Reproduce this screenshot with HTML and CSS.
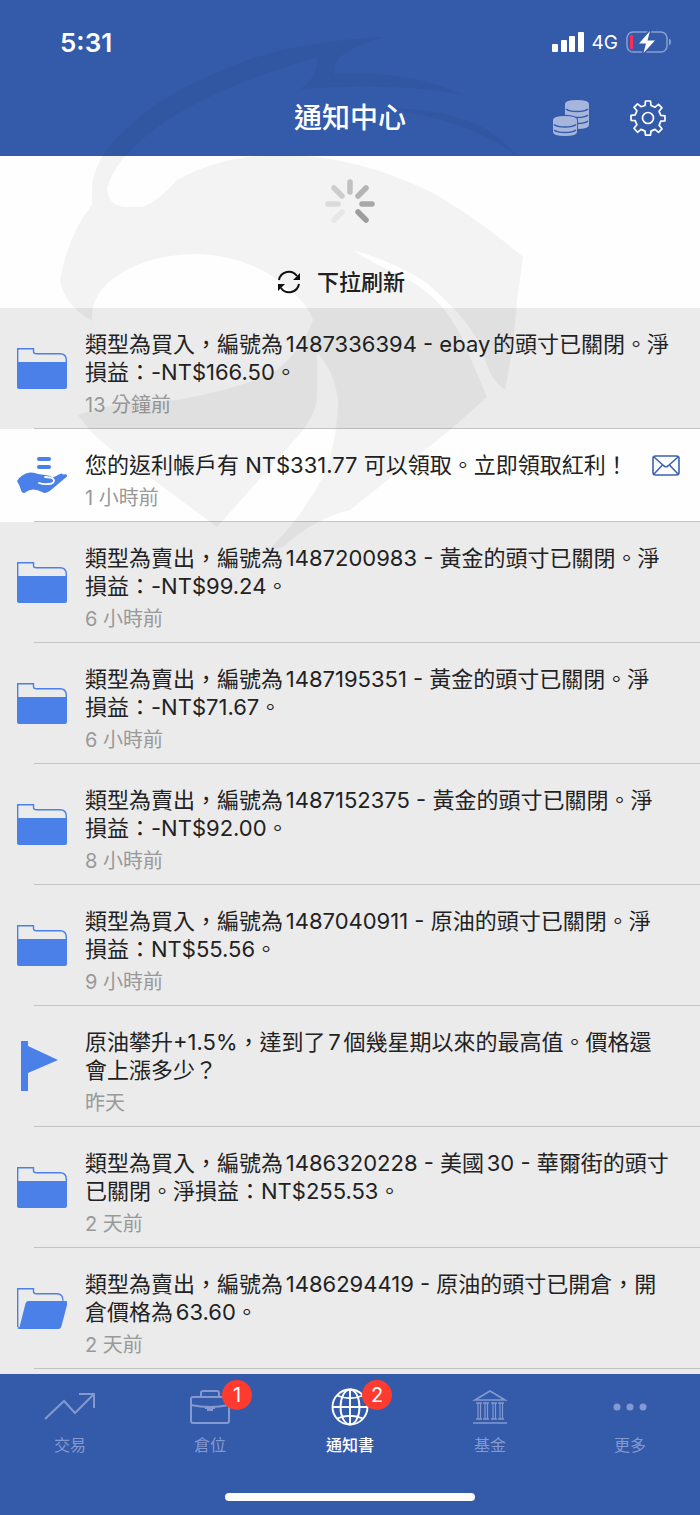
FILE: index.html
```html
<!DOCTYPE html>
<html lang="zh-Hant">

<head>
    <meta charset="UTF-8">
    <meta name="viewport" content="width=device-width, initial-scale=1.0">
    <title>通知中心</title>
    <link rel="stylesheet" href="styles.css">
</head>

<body>
    <!-- shared icons -->
    <svg class="defs" width="0" height="0">
        <symbol id="folder" viewBox="0 0 50 50">
            <path d="M.7 44V5.700h15.800v3q0 2 3 2H43q6.300 0 6.300 6.300V44" fill="none" stroke="#4a80e8" stroke-width="1.400" />
            <path d="M0 19h50v25q0 2-2 2H2q-2 0-2-2z" fill="#4a80e8" />
        </symbol>
        <symbol id="folder-open" viewBox="0 0 50 50">
            <path d="M.7 44V5.700h15.800v3q0 2 3 2H40q6 0 6 7M.7 45H4" fill="none" stroke="#4a80e8" stroke-width="1.400" />
            <path d="M11 18h38q2 0 1.500 2l-6 23q-.7 3-3 3H2L8.500 20.500q.6-2.500 2.500-2.500z" fill="#4a80e8" />
        </symbol>
        <symbol id="flag" viewBox="0 0 50 50">
            <path d="M4 0h7v5l30 14-30 13v18H4z" fill="#4a80e8" />
        </symbol>
        <symbol id="hand" viewBox="0 0 50 50">
            <g fill="#4a80e8">
                <rect x="20" y="7" width="14" height="4" rx="2" />
                <rect x="20" y="15" width="14" height="4" rx="2" />
                <path d="M0 31q4-7 13-8.500 4-.5 8 1.500l10 1.500q4 .5 4 2.500l8-4q2-1 3 .5 4-1 4.500 1.500L34 40q-5 4.500-9 2-4-2.500-9-2.500-4 0-7 2.500-3 2-4.500-.5Q3 36 0 31z" />
            </g>
            <path d="M22 33q4 1.500 10 1 5-.5 5-3.500 0-2-4-3l-5-.5" fill="none" stroke="#fefefe" stroke-width="1.800" stroke-linecap="round" />
        </symbol>
    </svg>

    <div id="app">
        <header>
            <div class="status">
                <span class="clock">5:31</span>
                <div class="signal">
                    <svg width="32" height="20" viewBox="0 0 32 20" fill="#fff">
                        <rect y="12" width="6" height="8" rx="1" />
                        <rect x="9" y="8" width="6" height="12" rx="1" />
                        <rect x="17" y="4" width="6" height="16" rx="1" />
                        <rect x="26" width="6" height="20" rx="1" />
                    </svg>
                    <span>4G</span>
                    <svg width="46" height="22" viewBox="0 0 46 22">
                        <rect x="1" y="1" width="40" height="20" rx="6" fill="none" stroke="#8a9fd0" stroke-width="1.500" />
                        <path d="M43.500 8q2.500 3 0 6z" fill="#8a9fd0" stroke="#8a9fd0" />
                        <rect x="4" y="4" width="3" height="14" rx="1" fill="#ff2d55" />
                        <path d="M24 0L13 12.500h7L17.500 22 29 9.500h-7.500z" fill="#fff" stroke="#345aaa" stroke-width="3" paint-order="stroke" />
                    </svg>
                </div>
            </div>
            <div class="titlebar">
                <h1>通知中心</h1>
                <button type="button" aria-label="返利">
                    <svg width="38" height="38" viewBox="0 0 38 38">
                        <path d="M13 5q0-4 12-4t12 4v21q0 4-12 4t-12-4z" fill="#a5b5dc" />
                        <path d="M14 10q3 2.500 11 2.500T36 10M14 16q3 2.500 11 2.500T36 16M14 22q3 2.500 11 2.500T36 22" fill="none" stroke="#345aaa" stroke-width="1.600" />
                        <path d="M1 21q0-4 12-4t12 4v12q0 4-12 4T1 33z" fill="#a5b5dc" stroke="#345aaa" stroke-width="2" paint-order="stroke" />
                        <path d="M2 25.500q3 2.500 11 2.500t11-2.500M2 31q3 2.500 11 2.500T24 31" fill="none" stroke="#345aaa" stroke-width="1.600" />
                    </svg>
                </button>
                <button type="button" aria-label="設定">
                    <svg width="36" height="36" viewBox="0 0 36 36" fill="none" stroke="#fff" stroke-width="1.700" stroke-linejoin="round">
                        <path d="M15 5.500L15.500 1h5l.5 4.500 4 1.700 3.500-2.900 3.500 3.500-2.900 3.500 1.700 4 4.200.5v5l-4.200.4-1.700 4.100 2.900 3.500-3.500 3.500-3.500-2.900-4 1.700-.5 4h-5l-.5-4-4-1.700-3.500 2.900L4 28.300l2.900-3.500-1.700-4.100-4.200-.4v-5l4.200-.5 1.700-4L4 7.300l3.500-3.500L11 6.700z" />
                        <circle cx="18" cy="18" r="5.500" />
                    </svg>
                </button>
            </div>
        </header>

        <section class="refresh">
            <svg class="spinner" width="52" height="52" viewBox="0 0 52 52" fill="none" stroke-width="5.500" stroke-linecap="round">
                <path d="M26 4v10" stroke="#cacaca" />
                <path d="M42 10l-8 8" stroke="#bdbdbd" />
                <path d="M48 26H38" stroke="#b0b0b0" />
                <path d="M42 42l-8-8" stroke="#a5a5a5" />
                <path d="M10 42l8-8" stroke="#f2f2f2" />
                <path d="M4 26h10" stroke="#e5e5e5" />
                <path d="M10 10l8 8" stroke="#d7d7d7" />
            </svg>
            <div class="pull">
                <svg width="24" height="24" viewBox="0 0 24 24">
                    <path d="M2 10A10 10 0 0 1 20 6M22 14A10 10 0 0 1 4 18" fill="none" stroke="#111" stroke-width="2" />
                    <path d="M23 3v7h-7zM1 21v-7h7z" fill="#111" />
                </svg>
                <span>下拉刷新</span>
            </div>
        </section>

        <ul class="list">
            <li>
                <svg class="icon"><use href="#folder" /></svg>
                <div class="text">
                    <p>類型為買入，編號為1487336394 - ebay的頭寸已關閉。淨損益：-NT$166.50。</p>
                    <time>13 分鐘前</time>
                </div>
            </li>
            <li class="unread">
                <svg class="icon"><use href="#hand" /></svg>
                <div class="text">
                    <p>您的返利帳戶有 NT$331.77 可以領取。立即領取紅利！</p>
                    <time>1 小時前</time>
                </div>
                <svg class="mail" width="28" height="21" viewBox="0 0 28 21" fill="none" stroke="#3d62ae" stroke-width="1.600">
                    <rect x="1" y="1" width="26" height="19" rx="2.500" />
                    <path d="M2 2l10 9q2 1.500 4 0l10-9M2 19l8.500-9M26 19l-8.500-9" />
                </svg>
            </li>
            <li>
                <svg class="icon"><use href="#folder" /></svg>
                <div class="text">
                    <p>類型為賣出，編號為1487200983 - 黃金的頭寸已關閉。淨損益：-NT$99.24。</p>
                    <time>6 小時前</time>
                </div>
            </li>
            <li>
                <svg class="icon"><use href="#folder" /></svg>
                <div class="text">
                    <p>類型為賣出，編號為1487195351 - 黃金的頭寸已關閉。淨損益：-NT$71.67。</p>
                    <time>6 小時前</time>
                </div>
            </li>
            <li>
                <svg class="icon"><use href="#folder" /></svg>
                <div class="text">
                    <p>類型為賣出，編號為1487152375 - 黃金的頭寸已關閉。淨損益：-NT$92.00。</p>
                    <time>8 小時前</time>
                </div>
            </li>
            <li>
                <svg class="icon"><use href="#folder" /></svg>
                <div class="text">
                    <p>類型為買入，編號為1487040911 - 原油的頭寸已關閉。淨損益：NT$55.56。</p>
                    <time>9 小時前</time>
                </div>
            </li>
            <li>
                <svg class="icon"><use href="#flag" /></svg>
                <div class="text">
                    <p>原油攀升+1.5%，達到了7個幾星期以來的最高值。價格還會上漲多少？</p>
                    <time>昨天</time>
                </div>
            </li>
            <li>
                <svg class="icon"><use href="#folder" /></svg>
                <div class="text">
                    <p>類型為買入，編號為1486320228 - 美國30 - 華爾街的頭寸已關閉。淨損益：NT$255.53。</p>
                    <time>2 天前</time>
                </div>
            </li>
            <li>
                <svg class="icon"><use href="#folder-open" /></svg>
                <div class="text">
                    <p>類型為賣出，編號為1486294419 - 原油的頭寸已開倉，開倉價格為63.60。</p>
                    <time>2 天前</time>
                </div>
            </li>
        </ul>

        <footer>
            <nav>
                <a href="#trade">
                    <svg width="52" height="38" viewBox="0 0 52 38" fill="none" stroke="currentColor" stroke-width="2">
                        <path d="M1 31l19-18 11 12L50 6M35 6h15v14" />
                    </svg>
                    交易
                </a>
                <a href="#positions">
                    <svg width="42" height="38" viewBox="0 0 42 38" fill="none" stroke="currentColor" stroke-width="2">
                        <rect x="2" y="9" width="38" height="26" rx="2" />
                        <path d="M12 9V5q0-2 2-2h14q2 0 2 2v4M2 17q19 4 38 0" />
                        <path d="M16 19h10v2h-2v2h-6v-2h-2z" fill="currentColor" stroke="none" />
                    </svg>
                    倉位
                    <span class="badge">1</span>
                </a>
                <a href="#notifications" class="active">
                    <svg width="38" height="38" viewBox="0 0 38 38" fill="none" stroke="currentColor" stroke-width="1.900">
                        <circle cx="19" cy="19" r="17.500" />
                        <ellipse cx="19" cy="19" rx="9.500" ry="17.500" />
                        <path d="M19 1v36M1 19h36M6 7.500q13 5.500 26 0M6 30.500q13-5.500 26 0" />
                    </svg>
                    通知書
                    <span class="badge">2</span>
                </a>
                <a href="#funds">
                    <svg width="36" height="38" viewBox="0 0 36 38" fill="none" stroke="currentColor" stroke-width="1.600">
                        <path d="M3 12L18 3l15 9zM4 15h6M11 15h6M19 15h6M26 15h6M4 31h6M11 31h6M19 31h6M26 31h6M1 35h34" />
                        <path d="M6 15v16M8.500 15v16M13 15v16M15.500 15v16M21 15v16M23.500 15v16M28 15v16M30.500 15v16" stroke-width="1.200" />
                    </svg>
                    基金
                </a>
                <a href="#more">
                    <svg width="36" height="38" viewBox="0 0 36 38" fill="currentColor">
                        <circle cx="5" cy="19" r="3.500" />
                        <circle cx="18" cy="19" r="3.500" />
                        <circle cx="31" cy="19" r="3.500" />
                    </svg>
                    更多
                </a>
            </nav>
            <div class="home"></div>
        </footer>

        <!-- eagle watermark over the page -->
        <svg class="watermark" width="540" height="560" viewBox="0 0 540 560">
            <path d="M383 37Q290 42 232 66Q160 95 130 126Q92 158 92 190V205Q68 235 60 280Q64 305 92 321Q90 292 120 274Q150 254 200 254Q255 257 290 290Q308 305 313 320Q302 350 277 370Q250 386 177 400Q110 402 78 415Q95 440 120 455L217 527L297 437Q317 415 317 395V353Q334 370 338 400Q338 440 323 477Q300 520 268 550L283 547Q315 518 350 510L450 430L487 397L470 357Q450 300 403 277Q370 262 353 250Q395 262 427 283Q475 325 483 353Q490 380 505 390Q514 345 517 300L523 257Q480 220 433 193Q355 155 283 155Q225 154 177 180Q160 200 143 207H127Q108 207 107 188Q115 160 150 133Q200 92 317 57Q318 78 300 89Q400 82 463 95Q410 70 335 74Q325 55 383 37z" />
            <path d="M383 108Q480 108 517 156Q470 120 383 108z" />
        </svg>
    </div>
</body>

</html>
```
FILE: styles.css
```css
body {
    margin: 0;
    font-family: Inter, "Noto Sans CJK TC", sans-serif;
    background-color: #fefefe;
    color: #222;
}

.defs {
    display: block;
}

#app {
    position: relative;
    display: flex;
    flex-direction: column;
    min-height: 100vh;
}

header {
    background-color: #345aaa;
    color: #fff;
}

.status {
    display: flex;
    justify-content: space-between;
    align-items: center;
    height: 84px;
    padding: 0 28px 0 60px;
}

.clock {
    font-size: 26px;
    font-weight: 600;
}

.signal {
    display: flex;
    align-items: center;
    gap: 8px;
    font-size: 19px;
}

.titlebar {
    display: grid;
    grid-template-columns: 1fr 56px 76px;
    align-items: center;
    height: 68px;
    padding: 0 34px 4px;
}

h1 {
    grid-column: 1 / -1;
    grid-row: 1;
    margin: 0;
    text-align: center;
    font-size: 28px;
    font-weight: 500;
    line-height: 40px;
}

.titlebar button {
    grid-row: 1;
    display: flex;
    justify-content: flex-end;
    padding: 0;
    border: none;
    background: none;
    cursor: pointer;
}

.titlebar button:nth-of-type(1) {
    grid-column: 2;
}

.titlebar button:nth-of-type(2) {
    grid-column: 3;
}

.refresh {
    display: flex;
    flex-direction: column;
    align-items: center;
    gap: 36px;
    height: 130px;
    padding-top: 22px;
}

.pull {
    display: flex;
    align-items: center;
    gap: 16px;
    padding-right: 18px;
    font-size: 22px;
    font-weight: 500;
    line-height: 32px;
}

.list {
    flex: 1;
    margin: 0;
    padding: 0 0 5px;
    list-style: none;
    background-color: #ebebeb;
}

.list li {
    display: flex;
    align-items: center;
    gap: 18px;
    padding: 22px 30px 10px 17px;
    background: linear-gradient(#c3c3c3, #c3c3c3) 34px 100% / 100% 1px no-repeat #ebebeb;
}

.list .unread {
    padding-right: 20px;
    background-color: #fefefe;
}

.icon {
    flex: none;
    width: 50px;
    height: 50px;
    margin-top: -14px;
    overflow: visible;
}

.text {
    flex: 1;
}

.text p {
    margin: 0 0 5px;
    font-size: 22px;
    line-height: 28px;
    text-autospace: normal;
}

.text time {
    display: block;
    font-size: 20px;
    line-height: 28px;
    color: #999;
}

.mail {
    align-self: flex-start;
    margin-top: 4px;
}

footer {
    background-color: #345aaa;
}

nav {
    display: grid;
    grid-template-columns: repeat(5, 1fr);
    height: 119px;
}

nav a {
    position: relative;
    display: flex;
    flex-direction: column;
    align-items: center;
    gap: 7px;
    padding-top: 14px;
    font-size: 16px;
    line-height: 24px;
    color: #8399d0;
    text-decoration: none;
}

nav .active {
    color: #fff;
    font-weight: 500;
}

.badge {
    position: absolute;
    top: 6px;
    left: calc(50% + 12px);
    width: 30px;
    border-radius: 50%;
    background-color: #ff3b30;
    color: #fff;
    font-size: 20px;
    font-weight: 400;
    line-height: 30px;
    text-align: center;
}

.home {
    width: 250px;
    height: 8px;
    margin: 0 auto 14px;
    border-radius: 4px;
    background-color: #fefefe;
}

.watermark {
    position: absolute;
    top: 0;
    left: 0;
    fill: #000;
    opacity: 0.04;
    pointer-events: none;
}
```
